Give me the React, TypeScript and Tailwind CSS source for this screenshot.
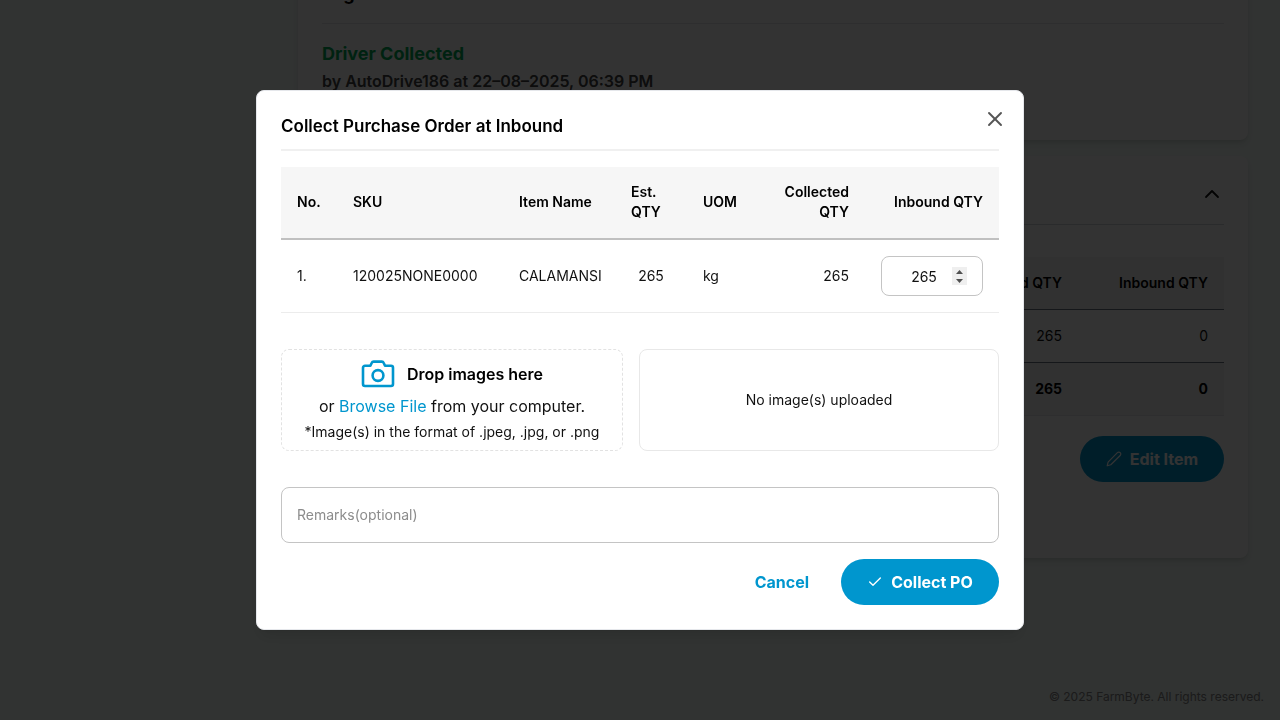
import { useState } from "react";
import { Check, ChevronUp, X } from "lucide-react";

const columns = [
  { label: "No.", width: "w-[56px]", align: "text-left" },
  { label: "SKU", width: "w-[166px]", align: "text-left" },
  { label: "Item Name", width: "w-[112px]", align: "text-left" },
  { label: "Est. QTY", width: "w-[72px]", align: "text-left" },
  { label: "UOM", width: "w-[66px]", align: "text-left" },
  { label: "Collected QTY", width: "w-[112px]", align: "text-right" },
  { label: "Inbound QTY", width: "w-[134px]", align: "text-right" },
];

function CameraIcon() {
  return (
    <svg width="34" height="28" viewBox="0 0 34 28" fill="none" stroke="currentColor" strokeWidth="2.6" strokeLinejoin="round" aria-hidden="true">
      <path d="M4 5.8h5.400l1.400-3a2 2 0 0 1 1.800-1.200h8.200a2 2 0 0 1 1.800 1.200l1.400 3H30a2 2 0 0 1 2 2V24a2 2 0 0 1-2 2H4a2 2 0 0 1-2-2V7.800a2 2 0 0 1 2-2Z" />
      <circle cx="17" cy="15.5" r="5.4" />
    </svg>
  );
}

function PencilIcon() {
  return (
    <svg width="16" height="16" viewBox="0 0 16 16" fill="none" stroke="currentColor" strokeWidth="1.2" strokeLinejoin="round" aria-hidden="true">
      <path d="M11.400 1.700a1.900 1.900 0 0 1 2.800 2.800L4.800 13.700l-3.600 1.100.9-3.700Z" />
    </svg>
  );
}

function OrderPage() {
  return (
    <div className="flex h-screen overflow-hidden bg-[#f3fcf8]" inert>
      <aside className="w-[298px] shrink-0" />
      <main className="-mt-5 flex min-w-0 flex-1 flex-col pr-8">
        <section className="h-[160px] shrink-0 rounded-b-lg bg-white px-6 shadow-md">
          <p className="border-b border-gray-200 pb-[15px] text-lg leading-7 font-bold text-black">Logistics Created</p>
          <h2 className="mt-4 text-lg leading-7 font-bold text-[#00ab55]">Driver Collected</h2>
          <p className="text-base leading-[26px] font-semibold text-[#404040]">by AutoDrive186 at 22–08–2025, 06:39 PM</p>
        </section>
        <section className="mt-4 h-[402px] shrink-0 rounded-lg bg-white px-6 shadow-md">
          <div className="flex h-[69px] items-center justify-end border-b border-gray-300 pt-2">
            <button type="button" aria-label="Collapse">
              <ChevronUp size={24} strokeWidth={1.8} />
            </button>
          </div>
          <table className="mt-8 w-full text-sm">
            <thead>
              <tr className="h-[52px] border-b border-gray-500 bg-[#f6f6f6]">
                <th className="pr-4 text-right font-semibold text-black">Collected QTY</th>
                <th className="w-[146px] pr-4 text-right font-semibold text-black">Inbound QTY</th>
              </tr>
            </thead>
            <tbody>
              <tr className="h-[53px] border-b border-gray-500">
                <td className="pr-4 text-right">265</td>
                <td className="pr-4 text-right">0</td>
              </tr>
              <tr className="h-[53px] border-b border-gray-200 bg-[#f6f6f6] font-bold text-black">
                <td className="pr-4 text-right">265</td>
                <td className="pr-4 text-right">0</td>
              </tr>
            </tbody>
          </table>
          <div className="mt-5 flex justify-end">
            <button type="button" className="flex h-[46px] w-[144px] items-center justify-center gap-2 rounded-full bg-[#0096ce] text-base font-bold text-white">
              <PencilIcon />
              Edit Item
            </button>
          </div>
        </section>
        <footer className="mt-auto -mr-4 pb-[15px] text-right text-xs leading-4 text-[#858585]">© 2025 FarmByte. All rights reserved.</footer>
      </main>
    </div>
  );
}

function QuantityField() {
  const [quantity, setQuantity] = useState(265);
  return (
    <div className="relative">
      <input
        type="number"
        aria-label="Inbound QTY"
        value={quantity}
        onChange={(event) => setQuantity(Number(event.target.value))}
        className="block h-10 w-full appearance-none rounded-lg border border-[#c4c4c4] pr-8 pl-4 text-center [appearance:textfield] [&::-webkit-inner-spin-button]:m-0 [&::-webkit-inner-spin-button]:appearance-none"
      />
      <div className="absolute inset-y-0 right-4 flex w-[15px] flex-col justify-center text-[#505050]">
        <button type="button" aria-label="Increase" onClick={() => setQuantity(quantity + 1)} className="flex h-[9px] items-center justify-center bg-[#efefef]">
          <svg width="7" height="4" viewBox="0 0 7 4" fill="currentColor" aria-hidden="true">
            <path d="M0 4 3.500 0 7 4Z" />
          </svg>
        </button>
        <button type="button" aria-label="Decrease" onClick={() => setQuantity(quantity - 1)} className="flex h-[9px] items-center justify-center bg-[#efefef]">
          <svg width="7" height="4" viewBox="0 0 7 4" fill="currentColor" aria-hidden="true">
            <path d="M0 0 3.500 4 7 0Z" />
          </svg>
        </button>
      </div>
    </div>
  );
}

export default function App() {
  return (
    <div className="font-[Inter,sans-serif] text-[#111111]">
      <OrderPage />
      <div className="fixed inset-0 flex items-center justify-center bg-black/80">
        <div role="dialog" aria-modal="true" aria-labelledby="dialog-title" className="relative w-full max-w-3xl rounded-lg border border-gray-200 bg-white p-6 shadow-lg">
          <button type="button" aria-label="Close" className="absolute top-4 right-4 text-[#555555]">
            <X size={24} strokeWidth={1.9} />
          </button>
          <h1 id="dialog-title" className="border-b-2 border-[#f0f0f0] pb-3 text-[17px] leading-[22px] font-semibold text-black">
            Collect Purchase Order at Inbound
          </h1>
          <table className="mt-4 w-full table-fixed text-sm">
            <thead>
              <tr className="h-[72px] border-b-2 border-[#c0c0c0] bg-[#f6f6f6]">
                {columns.map((column) => (
                  <th key={column.label} className={`${column.width} ${column.align} px-4 leading-5 font-semibold text-black`}>
                    {column.label}
                  </th>
                ))}
              </tr>
            </thead>
            <tbody>
              <tr className="h-[74px] border-b border-[#ececec]">
                <td className="px-4">1.</td>
                <td className="px-4">120025NONE0000</td>
                <td className="px-4">CALAMANSI</td>
                <td className="px-4 text-center">265</td>
                <td className="px-4">kg</td>
                <td className="px-4 text-right">265</td>
                <td className="px-4">
                  <QuantityField />
                </td>
              </tr>
            </tbody>
          </table>
          <div className="mt-9 flex h-[102px] gap-4">
            <div className="flex w-[342px] shrink-0 flex-col items-center justify-center rounded-lg border border-dashed border-[#e2e2e2]">
              <div className="flex h-8 items-center gap-3 text-[#0096ce]">
                <CameraIcon />
                <span className="text-base font-semibold text-black">Drop images here</span>
              </div>
              <p className="text-base leading-8">
                or{" "}
                <label className="cursor-pointer text-[#0096ce]">
                  Browse File
                  <input type="file" accept=".jpeg,.jpg,.png" multiple className="sr-only" />
                </label>{" "}
                from your computer.
              </p>
              <p className="text-sm leading-5">*Image(s) in the format of .jpeg, .jpg, or .png</p>
            </div>
            <div className="flex min-w-0 flex-1 items-center justify-center rounded-lg border border-[#e8e8e8] text-sm">No image(s) uploaded</div>
          </div>
          <input
            type="text"
            aria-label="Remarks"
            placeholder="Remarks(optional)"
            className="mt-9 block h-14 w-full rounded-lg border border-[#c4c4c4] px-[15px] pb-0.5 text-sm placeholder:text-[#8c8c8c]"
          />
          <div className="mt-4 flex h-[46px] items-center justify-end gap-8">
            <button type="button" className="text-base font-bold text-[#0096ce]">Cancel</button>
            <button type="button" className="flex h-[46px] w-[158px] items-center justify-center gap-2 rounded-full bg-[#0096ce] text-base font-bold text-white">
              <Check size={16} strokeWidth={2} />
              Collect PO
            </button>
          </div>
        </div>
      </div>
    </div>
  );
}
